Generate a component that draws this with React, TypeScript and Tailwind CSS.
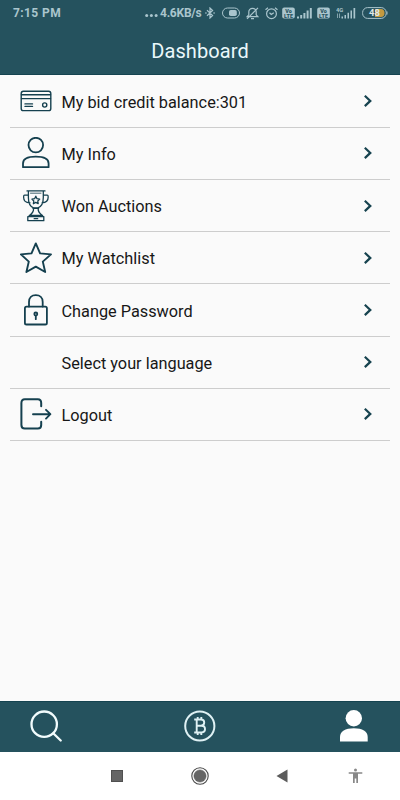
import type { ReactNode } from "react";

function MenuSvg({ children, width = 1.6 }: { children: ReactNode; width?: number }) {
  return (
    <svg
      className="w-8 h-8 shrink-0"
      viewBox="0 0 32 32"
      fill="none"
      stroke="#15404f"
      strokeWidth={width}
      strokeLinecap="round"
      strokeLinejoin="round"
    >
      {children}
    </svg>
  );
}

const cardIcon = (
  <MenuSvg width={1.4}>
    <rect x="1.2" y="6.2" width="29.6" height="19.4" rx="2.2" />
    <path d="M1.5 9.8H30.5M1.5 13.6H30.5M5 18.9H12.5M5 21.4H12.5" />
    <circle cx="24.7" cy="20" r="2.1" />
  </MenuSvg>
);

const userIcon = (
  <MenuSvg width={1.8}>
    <circle cx="15.8" cy="8.1" r="7.3" />
    <path d="M3 30.2V26.4C3 22.2 7.5 19.6 15.8 19.6S28.6 22.2 28.6 26.4V30.2Z" />
  </MenuSvg>
);

const trophyIcon = (
  <MenuSvg width={1.3}>
    <path d="M7 .9H25M8.4 1V7.5C8.4 12.5 10 16.6 13.5 17.8H18C21.5 16.6 23.3 12.5 23.3 7.5V1M8.2 5.2H4.6C3.6 5.2 3.6 6 3.6 7C3.6 11.2 5.4 12.6 10 12.8M23.4 5.2H27.2C28.2 5.2 28.2 6 28.2 7C28.2 11.2 26.4 12.6 22 12.8" />
    <path d="M10.5 3.2H21" strokeWidth={0.8} />
    <path d="M13 18.4H18.6M13.5 19C13.7 21.5 12 23.5 9.8 25.3M18.2 19C18 21.5 19.8 23.5 22 25.3M9.2 25.4H22.6M7.8 26.6H23.8V30.7H7.8ZM14.2 28.7H17.7" />
    <path d="M15.8 6.2L17 8.7L19.7 9.1L17.8 11L18.2 13.7L15.8 12.4L13.4 13.7L13.8 11L11.9 9.1L14.6 8.7Z" />
  </MenuSvg>
);

const starIcon = (
  <MenuSvg width={1.9}>
    <path d="M15.8 1.4L20.1 11.4L31 12.4L22.8 19.6L25.2 30L15.8 24.6L6.4 30L8.8 19.6L.9 12.4L11.5 11.4Z" />
  </MenuSvg>
);

const lockIcon = (
  <MenuSvg width={1.8}>
    <rect x="4.9" y="12.7" width="22" height="17.8" rx="1.6" />
    <path d="M9 12.5V8C9 3.7 11.7 1.2 15.8 1.2S22.7 3.7 22.7 8V12.5" />
    <circle cx="15.8" cy="20" r="1.5" />
    <path d="M15.8 22V25.2" />
  </MenuSvg>
);

const logoutIcon = (
  <MenuSvg width={2}>
    <path d="M21.2 8.2V5C21.2 2.6 20 1.3 17.8 1.3H4.8C2.6 1.3 1.4 2.6 1.4 5V27C1.4 29.3 2.6 30.5 4.8 30.5H17.8C20 30.5 21.2 29.3 21.2 27V23.8" />
    <path d="M13 16.2H30.2M26 11.8L30.4 16.2L26 20.6" strokeWidth={1.9} />
  </MenuSvg>
);

const MENU = [
  { label: "My bid credit balance:301", icon: cardIcon },
  { label: "My Info", icon: userIcon },
  { label: "Won Auctions", icon: trophyIcon },
  { label: "My Watchlist", icon: starIcon },
  { label: "Change Password", icon: lockIcon },
  { label: "Select your language", icon: null },
  { label: "Logout", icon: logoutIcon },
];

function Volte() {
  return (
    <svg className="w-[13px] h-3 shrink-0" viewBox="0 0 13 12">
      <rect x=".2" y=".4" width="12.6" height="11.2" rx="2" fill="#aac5cd" />
      <g fill="#25525e" fontFamily="Roboto, sans-serif" fontWeight="900" fontSize="5.4" textAnchor="middle">
        <text x="6.5" y="5.6">Vo</text>
        <text x="6.5" y="10.5">LTE</text>
      </g>
    </svg>
  );
}

function StatusBar() {
  return (
    <div className="h-[26px] pl-[13px] pr-3 flex items-center text-[#aac5cd] font-bold">
      <span className="text-[12px] leading-none tracking-[0.4px]">7:15 PM</span>
      <div className="ml-auto flex items-center">
        <svg className="w-[13px] h-3 shrink-0" viewBox="0 0 13 12" fill="currentColor">
          <circle cx="1.7" cy="8.5" r="1.5" />
          <circle cx="6.4" cy="8.5" r="1.5" />
          <circle cx="11.1" cy="8.5" r="1.5" />
        </svg>
        <span className="ml-[2px] w-[42px] text-[12px] leading-none tracking-[-0.25px] whitespace-nowrap">4.6KB/s</span>
        {/* Bluetooth */}
        <svg className="ml-[3px] w-2.5 h-3 shrink-0" viewBox="0 0 10 12" fill="none" stroke="currentColor" strokeWidth="1.2">
          <path d="M2 3.2L7.6 8.4L5 11V1L7.6 3.5L2 8.8M0 6H1.8M8.2 6H10" />
        </svg>
        <svg className="ml-[7px] w-[18px] h-3 shrink-0" viewBox="0 0 18 12" fill="none" stroke="currentColor">
          <rect x=".5" y="1" width="17" height="10" rx="5" />
          <rect x="7" y="3" width="7.8" height="6" rx="1.8" fill="currentColor" stroke="none" />
        </svg>
        {/* Muted bell */}
        <svg className="ml-1.5 w-[13px] h-[13px] shrink-0" viewBox="0 0 13 13" fill="none" stroke="currentColor" strokeWidth="1.2">
          <path d="M1.2 9.6H11.8L10.2 7.8V4.8C10.2 2.8 8.7 1.4 6.5 1.4S2.8 2.8 2.8 4.8V7.8L1.2 9.6ZM5 11.6H8M12 .8L1 11.9" />
        </svg>
        {/* Alarm */}
        <svg className="ml-1.5 w-[13px] h-[13px] shrink-0" viewBox="0 0 13 13" fill="none" stroke="currentColor" strokeWidth="1.2">
          <circle cx="6.5" cy="6.7" r="4.9" />
          <path d="M4.5 5.7L6.3 7.4L8.8 5.7M.5 2.7L3 .7M10 .7L12.5 2.7" />
        </svg>
        <div className="ml-1 flex items-center">
          <Volte />
        </div>
        <svg className="ml-0.5 w-4 h-3 shrink-0" viewBox="0 0 16 12" fill="currentColor">
          <path d="M0 9.5H2V11.5H0ZM3.2 8H5.2V11.5H3.2ZM6.4 6H8.4V11.5H6.4ZM9.6 3.5H11.6V11.5H9.6ZM12.8 1H14.8V11.5H12.8Z" />
        </svg>
        <div className="ml-1 flex items-center">
          <Volte />
        </div>
        <svg className="ml-1.5 w-5 h-[14px] shrink-0" viewBox="0 0 20 14" fill="currentColor">
          <text x="0" y="5.5" fontFamily="Roboto, sans-serif" fontWeight="700" fontSize="5.8">4G</text>
          <path d="M1 7.5H1.7V12H1ZM3 7.5H3.7V12H3ZM5.5 10.5H7V12.5H5.5ZM8.5 9H10V12.5H8.5ZM11.5 6.8H13V12.5H11.5ZM14.5 4.5H16V12.5H14.5ZM17.5 2H19.2V12.5H17.5Z" />
        </svg>
        {/* Battery */}
        <svg className="ml-1.5 w-[26px] h-3 shrink-0" viewBox="0 0 26 12">
          <path d="M13 2H19C21.2 2 22.5 3.5 22.5 6S21.2 10 19 10H13Z" fill="#c49a3f" />
          <rect x=".6" y=".6" width="23.6" height="10.8" rx="5" fill="none" stroke="#aac5cd" />
          <path d="M25 4.5V7.5" stroke="#aac5cd" />
          <text x="12.4" y="9.3" textAnchor="middle" fill="#e0e9e7" fontFamily="Roboto, sans-serif" fontWeight="700" fontSize="9.5">48</text>
        </svg>
      </div>
    </div>
  );
}

export default function App() {
  return (
    <div className="w-[400px] h-[800px] flex flex-col bg-[#fafafa] overflow-hidden font-['Roboto',sans-serif]">
      <header className="h-[75px] shrink-0 bg-[#25525e] border-b border-[#154350]">
        <StatusBar />
        <h1 className="h-[49px] flex items-center justify-center text-[20px] leading-none tracking-[0.1px] text-[#eaf8fb]">
          Dashboard
        </h1>
      </header>

      <main className="flex-1 px-2.5 pt-[0.7px]">
        {MENU.map((item) => (
          <div
            key={item.label}
            className="h-[52.2px] pl-2.5 pr-[15px] flex items-center border-b border-[#cdcdcd]"
          >
            <span className="w-8 shrink-0 -ml-[0.3px]">{item.icon}</span>
            <span className="ml-[9.8px] pt-[3px] text-[16.3px] leading-5 text-[#171717]">{item.label}</span>
            <svg className="ml-auto w-3.5 h-3.5" viewBox="0 0 14 14" fill="none" stroke="#17434f" strokeWidth="2.2">
              <path d="M3.8 1.7L9.3 6.9L3.8 12.1" />
            </svg>
          </div>
        ))}
      </main>

      {/* Tab bar */}
      <nav className="h-[51px] shrink-0 px-[30px] pb-[1.4px] flex items-center justify-between bg-[#25525e] border-t border-[#154350]">
        <svg className="w-8 h-8" viewBox="0 0 32 32" fill="none" stroke="#f2fcfd" strokeWidth="2.3" strokeLinecap="round">
          <circle cx="14.2" cy="14.2" r="12.7" />
          <path d="M23.5 23.5L30.7 30.5" />
        </svg>
        <svg className="w-8 h-8" viewBox="0 0 32 32" fill="none" stroke="#dff1f4" strokeWidth="2">
          <circle cx="15.8" cy="16" r="14.6" />
          <path d="M10.2 9.5H17C21.3 9.5 21.3 15.7 17 15.7H13H17.5C22.2 15.7 22.2 22.5 17.5 22.5H10.2M12.7 9.5V22.5M13.7 6.9V9.5M17.3 6.9V9.5M13.7 22.5V25.1M17.3 22.5V25.1" strokeWidth="1.9" />
        </svg>
        <svg className="w-8 h-8" viewBox="0 0 32 32" fill="#fff">
          <circle cx="15.8" cy="8.3" r="8.2" />
          <path d="M2 31.4V27C2 21.5 7.2 18.3 15.8 18.3S29.7 21.5 29.7 27V31.4Z" />
        </svg>
      </nav>

      {/* System buttons */}
      <div className="h-12 shrink-0 pl-[111px] pr-[37px] flex items-center justify-between bg-white">
        <span className="w-3 h-3 bg-[#656565] border border-[#505050]" />
        <svg className="ml-[22px] w-[18px] h-[18px]" viewBox="0 0 18 18">
          <circle cx="9" cy="9" r="8.2" fill="none" stroke="#484848" strokeWidth="1.1" />
          <circle cx="9" cy="9" r="6.1" fill="#656565" stroke="#505050" strokeWidth=".5" />
        </svg>
        <svg className="ml-[22px] w-3 h-[14px]" viewBox="0 0 12 14">
          <path d="M.5 7L11.5 .5V13.5Z" fill="#5c5c5c" />
        </svg>
        <svg className="ml-[14px] w-[15px] h-4" viewBox="0 0 15 16" fill="#888">
          <circle cx="7.5" cy="2" r="1.5" />
          <path d="M.7 4.2H14.3V5.7H10V15H8.3V10.4H6.7V15H5V5.7H.7Z" />
        </svg>
      </div>
    </div>
  );
}
